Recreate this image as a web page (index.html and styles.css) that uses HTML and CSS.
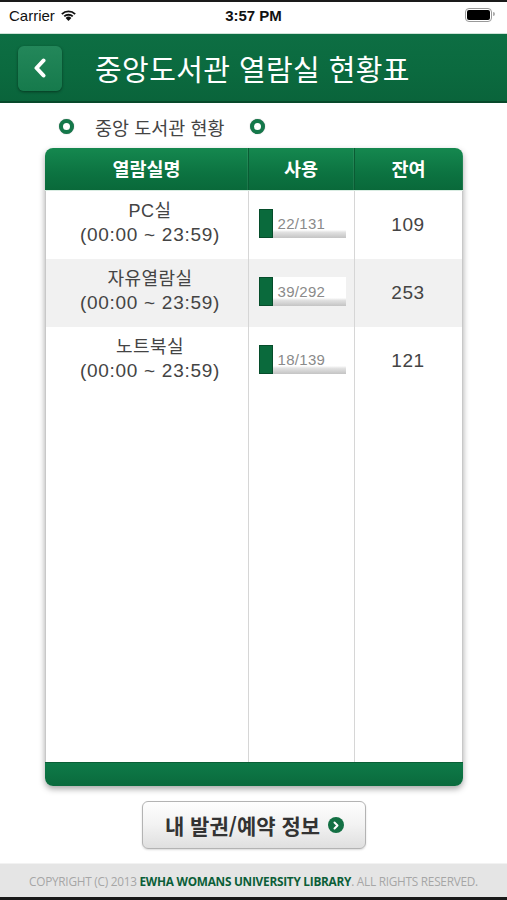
FILE: index.html
```html
<!DOCTYPE html>
<html lang="ko">
<head>
    <meta charset="UTF-8">
    <meta name="viewport" content="width=device-width, initial-scale=1.0">
    <title>중앙도서관 열람실 현황표</title>
    <link rel="stylesheet" href="styles.css">
</head>
<body>
    <div class="statusbar">
        <div class="carrier">
            Carrier
            <svg class="wifi" width="17" height="12" viewBox="0 0 17 12">
                <path d="M8.5 12 L5.6 8.9 A4.2 4.2 0 0 1 11.4 8.9 Z" fill="#111"/>
                <path d="M3.6 6.8 A7 7 0 0 1 13.4 6.8 L12.1 8.1 A5.2 5.2 0 0 0 4.9 8.1 Z" fill="#111"/>
                <path d="M1.2 4.4 A10.4 10.4 0 0 1 15.8 4.4 L14.5 5.7 A8.6 8.6 0 0 0 2.5 5.7 Z" fill="#111"/>
            </svg>
        </div>
        <div class="time">3:57 PM</div>
        <div class="battery"><span class="battery-level"></span></div>
    </div>

    <header class="topbar">
        <button class="back">
            <svg width="14" height="20" viewBox="0 0 14 20">
                <path d="M10.5 2.5 L3.5 10 L10.5 17.5" fill="none" stroke="#fff" stroke-width="4" stroke-linecap="round" stroke-linejoin="round"/>
            </svg>
        </button>
        <h1>중앙도서관 열람실 현황표</h1>
    </header>

    <main class="content">
        <div class="subtitle">
            <span class="dot"></span>
            <span class="subtitle-text">중앙 도서관 현황</span>
            <span class="dot"></span>
        </div>

        <div class="card">
            <div class="card-head">
                <div>열람실명</div>
                <div>사용</div>
                <div>잔여</div>
            </div>
            <div class="card-body">
                <div class="room">
                    <div class="room-name">PC실<br><span class="hours">(00:00 ~ 23:59)</span></div>
                    <div class="room-use">
                        <div class="usebar"><span class="usebar-fill"></span><span class="usebar-text">22/131</span></div>
                    </div>
                    <div class="room-left">109</div>
                </div>
                <div class="room alt">
                    <div class="room-name">자유열람실<br><span class="hours">(00:00 ~ 23:59)</span></div>
                    <div class="room-use">
                        <div class="usebar"><span class="usebar-fill"></span><span class="usebar-text">39/292</span></div>
                    </div>
                    <div class="room-left">253</div>
                </div>
                <div class="room">
                    <div class="room-name">노트북실<br><span class="hours">(00:00 ~ 23:59)</span></div>
                    <div class="room-use">
                        <div class="usebar"><span class="usebar-fill"></span><span class="usebar-text">18/139</span></div>
                    </div>
                    <div class="room-left">121</div>
                </div>
                <div class="room filler">
                    <div></div><div></div><div></div>
                </div>
            </div>
            <div class="card-foot"></div>
        </div>

        <div class="actions">
            <button class="my-button">내 발권/예약 정보 <span class="go">
                <svg width="8" height="9" viewBox="0 0 8 9"><path d="M2.5 1.5 L5.5 4.5 L2.5 7.5" fill="none" stroke="#fff" stroke-width="2" stroke-linecap="round" stroke-linejoin="round"/></svg>
            </span></button>
        </div>
    </main>

    <footer class="copyright">
        <p>COPYRIGHT (C) 2013 <b>EWHA WOMANS UNIVERSITY LIBRARY</b>. ALL RIGHTS RESERVED.</p>
    </footer>
</body>
</html>
```

FILE: styles.css
```css
html, body {
    margin: 0;
    padding: 0;
}
body {
    width: 507px;
    height: 900px;
    overflow: hidden;
    background: #fff;
    font-family: "Liberation Sans", "Noto Sans CJK KR", sans-serif;
    display: flex;
    flex-direction: column;
    border-top: 2px solid #1a1a1a;
    border-bottom: 3px solid #1a1a1a;
    box-sizing: border-box;
}

/* status bar */
.statusbar {
    height: 31px;
    display: flex;
    align-items: center;
    padding: 0 9px;
    position: relative;
    font-size: 15px;
    color: #111;
}
.carrier {
    display: flex;
    align-items: center;
    gap: 5px;
    flex: 1;
    margin-top: -4px;
}
.time {
    position: absolute;
    left: 0;
    right: 0;
    text-align: center;
    font-weight: bold;
    margin-top: -4px;
    pointer-events: none;
}
.battery {
    width: 23px;
    height: 10px;
    border: 1px solid #999;
    border-radius: 4px;
    padding: 1px;
    margin-right: 6px;
    margin-top: -4px;
    position: relative;
}
.battery::after {
    content: "";
    position: absolute;
    right: -4px;
    top: 3px;
    width: 2px;
    height: 4px;
    background: #aaa;
    border-radius: 0 2px 2px 0;
}
.battery-level {
    display: block;
    height: 100%;
    background: #000;
    border-radius: 2px;
}

/* green title bar */
.topbar {
    height: 68px;
    display: flex;
    align-items: center;
    gap: 33px;
    padding: 0 18px;
    background: linear-gradient(#0d6e43, #0b6a3f 55%, #0a643b);
    border-top: 1px solid #cfe3d8;
    border-bottom: 2px solid #07492b;
}
.back {
    width: 44px;
    height: 45px;
    border: none;
    border-radius: 6px;
    background: linear-gradient(#23875a, #167a4c);
    box-shadow: 0 1px 3px rgba(0,0,0,0.45);
    display: flex;
    align-items: center;
    justify-content: center;
    padding: 0;
    margin-top: 1px;
}
.topbar h1 {
    margin: 0;
    color: #fff;
    font-family: "Noto Sans CJK KR", sans-serif;
    font-weight: normal;
    font-size: 29px;
    letter-spacing: 0.4px;
}

.content {
    flex: 1;
    display: flex;
    flex-direction: column;
    align-items: center;
}

/* subtitle */
.subtitle {
    align-self: flex-start;
    display: flex;
    align-items: center;
    margin: 12px 0 0 59px;
    height: 23px;
}
.dot {
    width: 7px;
    height: 7px;
    border: 4px solid #14784a;
    border-radius: 50%;
    background: #fff;
    box-shadow: 0 0 1px rgba(0,0,0,0.5);
}
.subtitle-text {
    font-family: "Noto Sans CJK KR", sans-serif;
    font-size: 18.5px;
    color: #444;
    margin: 0 25px 0 21px;
}

/* table card */
.card {
    width: 418px;
    margin-top: 10px;
    border-radius: 8px;
    box-shadow: 0 3px 6px rgba(0,0,0,0.35);
    overflow: hidden;
    display: flex;
    flex-direction: column;
    height: 638px;
}
.card-head {
    display: grid;
    grid-template-columns: 204px 106px 1fr;
    height: 42px;
    background: linear-gradient(#15884f, #0c7341 60%, #09693a);
    border-bottom: 1px solid #d9ece2;
    color: #fff;
    font-family: "Noto Sans CJK KR", sans-serif;
    font-weight: bold;
    font-size: 18.5px;
}
.card-head div {
    display: flex;
    align-items: center;
    justify-content: center;
    border-right: 1px solid #0a5c34;
    box-shadow: inset -1px 0 0 rgba(255,255,255,0.08);
    margin-top: -3px;
}
.card-head div:first-child {
    padding-left: 1px;
}
.card-head div:last-child {
    border-right: none;
}
.card-body {
    flex: 1;
    display: flex;
    flex-direction: column;
    background: #fff;
    border-left: 1px solid #c8c8c8;
    border-right: 1px solid #c8c8c8;
}
.room {
    display: grid;
    grid-template-columns: 203px 106px 1fr;
    height: 68px;
    color: #444;
    font-size: 18px;
}
.room.alt {
    background: #f1f1f1;
}
.room.filler {
    flex: 1;
}
.room > div {
    border-right: 1px solid #d6d6d6;
}
.room > div:last-child {
    border-right: none;
}
.room-name {
    text-align: center;
    line-height: 24px;
    padding: 8px 0 0 7px;
    letter-spacing: 0.4px;
}
.hours {
    font-size: 19px;
    letter-spacing: 0.7px;
}
.room-use {
    display: flex;
    align-items: center;
    padding-left: 10px;
}
.usebar {
    width: 87px;
    height: 29px;
    display: flex;
    align-items: center;
    background: linear-gradient(#fff 0%, #fff 72%, #e2e2e2 80%, #c4c4c4 100%);
    margin-top: -3px;
}
.usebar-fill {
    width: 14px;
    height: 29px;
    background: #0a6a3c;
    border: 1px solid #064d2b;
    box-sizing: border-box;
}
.usebar-text {
    font-size: 15px;
    color: #8a8a8a;
    margin-left: 5px;
    letter-spacing: 0.3px;
}
.room-left {
    display: flex;
    align-items: center;
    justify-content: center;
    font-size: 19px;
    letter-spacing: 0.6px;
}
.card-foot {
    height: 23px;
    background: linear-gradient(#0e7a48, #0a6a3d);
    border-top: 1px solid #0a5f36;
}

/* button */
.actions {
    margin-top: 15px;
}
.my-button {
    width: 224px;
    height: 48px;
    border: 1px solid #b3b3b3;
    border-radius: 6px;
    background: linear-gradient(#fefefe, #f2f2f2 50%, #dfdfdf);
    font-family: "Noto Sans CJK KR", sans-serif;
    font-weight: bold;
    font-size: 21px;
    color: #333;
    display: flex;
    align-items: center;
    justify-content: center;
    gap: 4px;
    padding: 0 0 0 2px;
    box-shadow: 0 1px 2px rgba(0,0,0,0.15);
}
.go {
    width: 16px;
    height: 16px;
    border-radius: 50%;
    background: #137044;
    display: flex;
    align-items: center;
    justify-content: center;
    margin-left: 4px;
}

/* footer */
.copyright {
    height: 33px;
    margin-top: 14px;
    background: #e5e5e5;
    border-top: 1px solid #f2f2f2;
    display: flex;
    align-items: center;
    justify-content: center;
}
.copyright p {
    margin: 0;
    font-family: "Open Sans", sans-serif;
    font-size: 11.8px;
    color: #a6a6a6;
    letter-spacing: -0.25px;
    white-space: nowrap;
}
.copyright b {
    color: #0b5e38;
}
```
